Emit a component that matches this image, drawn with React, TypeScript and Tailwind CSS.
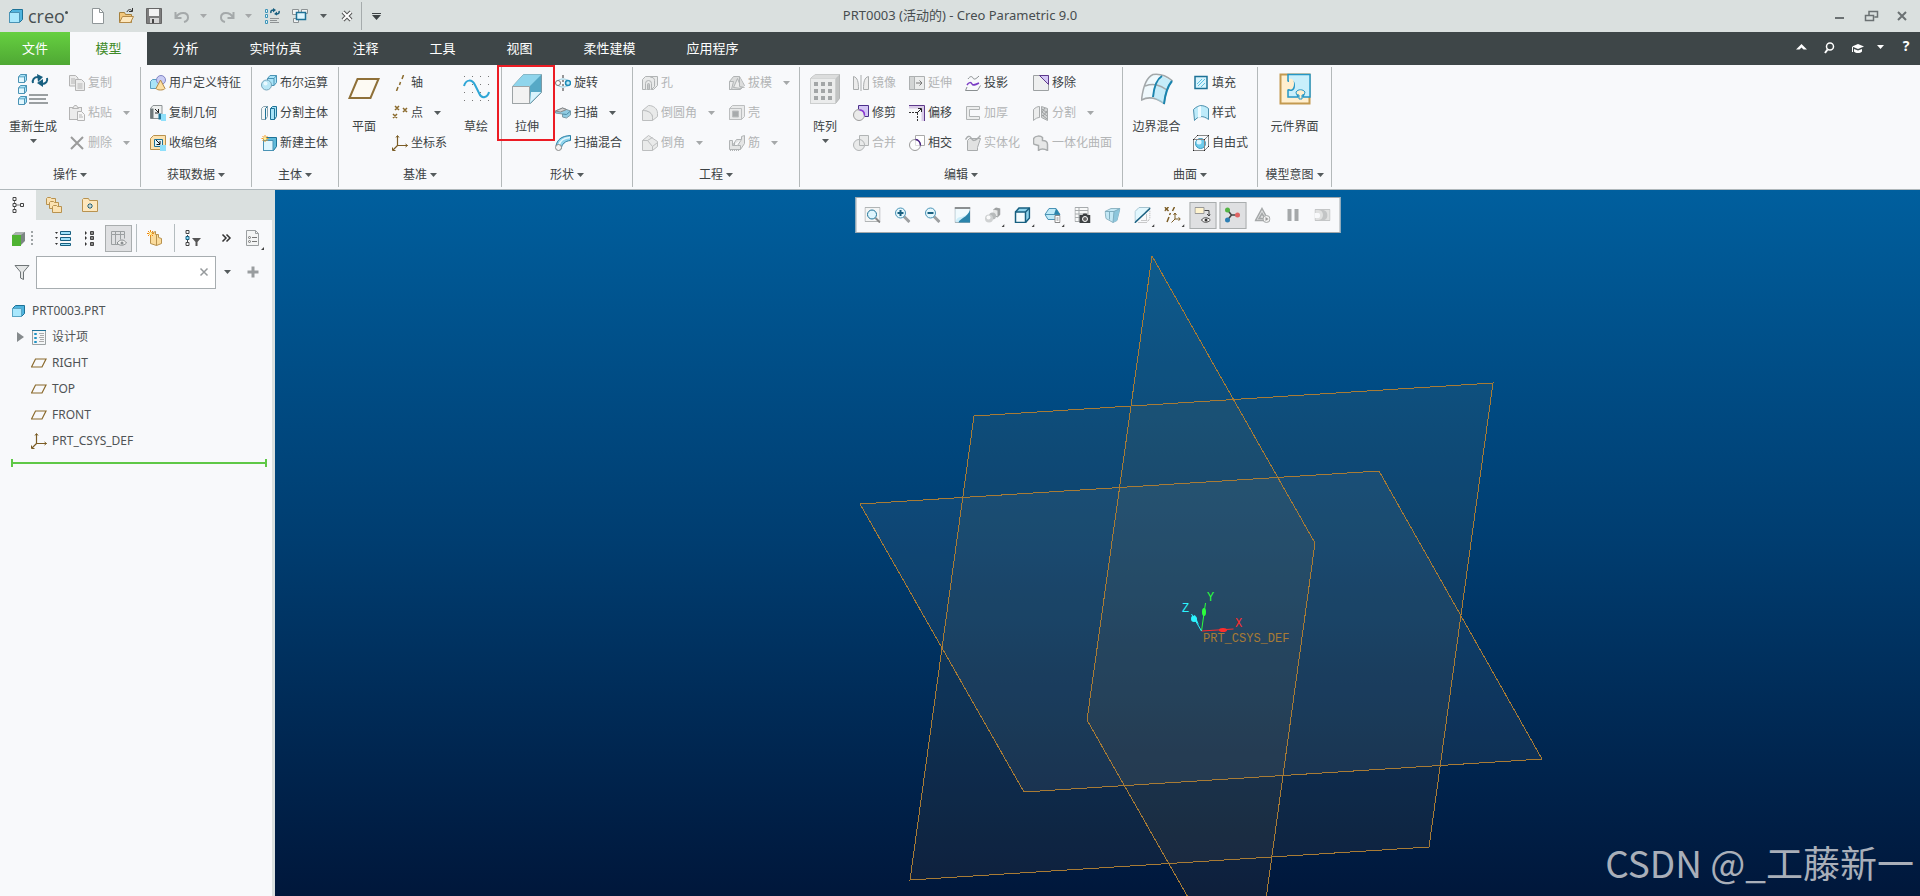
import type { ReactNode } from 'react'
import clsx from 'clsx'

const FONT = 'font-["Noto_Sans","Noto_Sans_CJK_SC",sans-serif]'

interface ArtProps {
  size?: number
  children: ReactNode
}

function Art({ size = 16, children }: ArtProps) {
  return (
    <svg width={size} height={size} viewBox={`0 0 ${size} ${size}`} fill="none" className="block shrink-0" aria-hidden="true">
      {children}
    </svg>
  )
}

function Caret({ className = 'text-[#555b5d]' }: { className?: string }) {
  return (
    <svg width="7" height="4" viewBox="0 0 7 4" className={clsx('shrink-0', className)} aria-hidden="true">
      <path d="M0 0h7L3.5 4z" fill="currentColor" />
    </svg>
  )
}

const Box = ({ x, y }: { x: number; y: number }) => (
  <g transform={`translate(${x} ${y})`}>
    <path d="M.5 3l2-2.500h6v5.500l-2 2.500h-6z" fill="#a9e4f8" stroke="#4a93b5" />
    <path d="M.5 3h6v5.500M6.500 3l2-2.500" stroke="#4a93b5" />
    <rect x="1" y="3.500" width="5" height="4.500" fill="#e2f7fe" />
  </g>
)

// 16px icons of the ribbon rows and the title bar
const icons: Record<string, ReactNode> = {
  copy: (
    <g fill="#ececec" stroke="#b4b4b4">
      <path d="M.5 .5h6l2.500 2.500v8h-8.500z" />
      <path d="M2 4h4M2 6h4M2 8h4" />
      <path d="M6.500 4.500h6l3 3v8h-9z" />
      <path d="M8.500 9h5M8.500 11h5M8.500 13h5" />
    </g>
  ),
  paste: (
    <g fill="#ececec" stroke="#b4b4b4">
      <rect x=".5" y="2.500" width="12" height="12" />
      <path d="M3.500 3.500l2-3h2l2 3z" />
      <path d="M8.500 6.500h4l3 3v6h-7z" fill="#f6f6f6" />
      <path d="M10 10h3M10 12h4" />
    </g>
  ),
  remove: <path d="M2 2l12 12M14 2L2 14" stroke="#9b9b9b" strokeWidth="2" />,
  udf: (
    <>
      <path d="M.5 6.500l2-2h7v7l-2 2h-7z" fill="#a9e4f8" stroke="#5b9dc0" />
      <circle cx="11" cy="5" r="4.500" fill="#c9cdf4" stroke="#8186c4" />
      <path d="M10.500 5l4.500 8.500c-1 2-8 2-9 0z" fill="#fde0a4" stroke="#b48a48" />
    </>
  ),
  copyGeom: (
    <>
      <path d="M.5 3.500l2.500-3h9v9l-2.500 4h-9z" fill="#eef0f0" stroke="#8d9294" />
      <path d="M.5 3.500h3v10h-3z" fill="#6f787b" />
      <path d="M5 4l3 3M8.500 4v4H5" stroke="#222" />
      <path d="M8.500 8.500h3v6h-3z" fill="#1d7297" />
      <path d="M11 9h5v7h-5z" fill="#8fe0fb" />
    </>
  ),
  shrink: (
    <>
      <path d="M.5 3.500l3-3h12v12l-2 2H.5z" fill="#fde3b0" stroke="#b8924f" />
      <path d="M4.500 4.500h8v7h-8z" fill="#dff4fb" stroke="#1d7297" />
      <path d="M6 5l4 4M10 6v3.500H6.500" stroke="#111" />
      <path d="M10 10h6v6h-6z" fill="#8fe0fb" />
    </>
  ),
  boolean: (
    <>
      <path d="M6.500 3.500l2.500-3h6.500v7l-2.500 3h-6.500z" fill="#a9e4f8" stroke="#4a93b5" />
      <path d="M6.500 3.500h6.500v7M13 3.500l2.500-3" stroke="#4a93b5" />
      <circle cx="5.500" cy="10" r="5" fill="#b9e7f6" stroke="#75a5bb" />
      <circle cx="4.500" cy="8.500" r="2" fill="#e9f9ff" />
    </>
  ),
  splitBody: (
    <>
      <path d="M.5 3.500l2-2h4v10l-2 3h-4z" fill="#f3f6f7" stroke="#8aa3ae" />
      <path d="M4.500 3.500v11M4.500 3.500l2-2" stroke="#1d7297" />
      <path d="M9.500 3.500l2-2h4v10l-2 3h-4z" fill="#a9e4f8" stroke="#1d7297" />
      <path d="M9.500 3.500h4v11" stroke="#1d7297" />
    </>
  ),
  newBody: (
    <>
      <path d="M2.500 4.500l2-2h11v9l-3 4h-10z" fill="#5fb9d9" stroke="#1d7297" />
      <path d="M2.500 5.500h9.500v10H2.500z" fill="#dff6fe" stroke="#4a93b5" />
      <path d="M4 0v7M.5 3.500h7M1.500 1l5 5M6.500 1l-5 5" stroke="#f39a1f" />
      <circle cx="4" cy="3.500" r="1.500" fill="#fff3a0" />
    </>
  ),
  axis: <path d="M11.500 0L10 4M8.500 7l-1 3M6 12l-1.500 4" stroke="#8a6a2c" strokeWidth="1.500" />,
  points: <path d="M3 1l4 4M7 1L3 5M11 3l4 4M15 3l-4 4M1 9l4 4M5 9l-4 4" stroke="#8a6a2c" strokeWidth="1.500" />,
  csys: (
    <>
      <path d="M5.500 1v9.500h10M5.500 10.500L1 15" stroke="#7b5c24" strokeWidth="1.200" />
      <path d="M4 2.500L5.500.5 7 2.500M13.500 9l2 1.500-2 1.500M.5 12.500v3h3" stroke="#7b5c24" />
    </>
  ),
  revolve: (
    <>
      <path d="M8 0v3M8 5v2M8 9v2M8 13v3" stroke="#333" />
      <path d="M3 5.500c3-2 7-2 10 0M3 10.500c3 2 7 2 10 0" stroke="#8cc9de" />
      <circle cx="3" cy="8" r="2.500" fill="#fff" stroke="#777" />
      <circle cx="13" cy="8" r="2.500" fill="#bfeaf8" stroke="#1d8bb7" strokeWidth="1.500" />
    </>
  ),
  sweep: (
    <>
      <path d="M.5 6l7-3 8 3v4l-4 3-4-1V9l-7-1z" fill="#8fcbe2" stroke="#7d9aa5" />
      <path d="M.5 6l7-3 4 1.500-6 2.500z" fill="#d2d2d2" stroke="#888" />
      <path d="M7.500 9l4 .5 4-3.500" stroke="#4c8ba5" />
    </>
  ),
  sweepBlend: (
    <>
      <path d="M1 11C2 5 6 1 15.500.5v5C10 6 7 9 6 14z" fill="#8ed3ec" stroke="#2b7fa4" />
      <path d="M4 10C5 6 9 3 15 2.500" stroke="#e6f8fe" strokeWidth="1.500" />
      <circle cx="3.500" cy="12.500" r="3" fill="#f3f3f3" stroke="#888" />
    </>
  ),
  hole: (
    <g fill="#e9eaea" stroke="#b1b4b5">
      <path d="M.5 4.500l3-3h12v9l-4 4h-11z" />
      <path d="M3.500 14.500v-6a3 3 0 0 1 6 0v6M9.500 14.500l3-3v-6a3 3 0 0 0-4-3" />
      <path d="M5.500 14.500v-5a1 1 0 0 1 2 0v5z" fill="#c4c6c7" />
    </g>
  ),
  round: (
    <g fill="#e9eaea" stroke="#bcbebf">
      <path d="M.5 5.500l6-5c5 0 9 3 9 8v3l-5 4v-3c0-4-4-7-10-7z" />
      <path d="M.5 5.500v10h10v-3c0-4-4-7-10-7z" />
    </g>
  ),
  chamfer: (
    <g fill="#e9eaea" stroke="#bcbebf">
      <path d="M.5 5.500l6-5 9 6v5l-5 4z" />
      <path d="M.5 5.500v10h10v-4l-5-6z" />
      <path d="M5.500 5.500l5-3M10.500 11.500l5-4" />
    </g>
  ),
  draft: (
    <g fill="#dcdddd" stroke="#b1b4b5">
      <path d="M.5 6.500l4-5h6l5 9-4 4H.5z" />
      <path d="M.5 14.500v-8h4l-2 8zM4.500 12.500l4-9 4 10z" fill="#ececec" />
      <path d="M10.500 1.500v10l5 1" />
    </g>
  ),
  shell: (
    <g fill="#e9eaea" stroke="#bcbebf">
      <path d="M.5 3.500l3-3h12v11l-3 3H.5z" />
      <path d="M.5 3.500h12v11H.5z" />
      <path d="M3.500 6h6v6h-6z" fill="#a8abac" />
    </g>
  ),
  rib: (
    <g fill="#e4e5e5" stroke="#b1b4b5">
      <path d="M.5 5.500h3v5h5l4-6v-3l3-1v8l-4 6H.5z" />
      <path d="M3.500 10.500l4-6h5M5.500 7.500v3M11.500 14.500v-4h-3" />
      <path d="M1 15.500h10" strokeDasharray="1 1" />
    </g>
  ),
  mirror: (
    <g fill="#ececec" stroke="#a9acad">
      <path d="M.5 14.500V1.500c4 1 5 5 5 13zM15.500 14.500V1.500c-4 1-5 5-5 13z" />
      <path d="M8 0v16" />
    </g>
  ),
  trim: (
    <>
      <path d="M5.500.5h10v11h-4c0-4-2-6-6-6z" fill="#d4c6f5" stroke="#4c2f8c" />
      <circle cx="6" cy="10" r="5.500" fill="#e6e6e6" fillOpacity=".8" stroke="#9b9b9b" />
      <path d="M6.500 5c3 0 5 2 5 5.500" stroke="#8b35d8" strokeWidth="1.500" />
    </>
  ),
  merge: (
    <g fill="#e9eaea" stroke="#b1b4b5">
      <path d="M6.500.5h9v10h-9z" />
      <circle cx="6" cy="10" r="5.500" />
      <path d="M6.500 5v5.500h5" />
    </g>
  ),
  extend: (
    <g stroke="#adb0b1" fill="#eceded">
      <path d="M.5 1.500h5v13h-5zM5.500 1.500h10v13h-10z" />
      <path d="M.5 1.500h5v13h-5z" fill="#d3d5d5" />
      <path d="M7 8h6M10.500 5.500L13 8l-2.500 2.500" stroke="#777" />
    </g>
  ),
  offset: (
    <>
      <path d="M0 2h14v14" stroke="#d9cbe8" strokeWidth="3" />
      <path d="M0 .5h15.500V16" stroke="#5e3a8c" />
      <path d="M0 7.500h8.500V16" stroke="#333" strokeDasharray="2 1" />
      <path d="M8 8l4-4M9 3.500h3.500V7" stroke="#222" />
    </>
  ),
  intersect: (
    <>
      <path d="M6.500.5h9v10h-9z" fill="#fff" stroke="#aaa" />
      <circle cx="6" cy="10" r="5.500" fill="#fff" fillOpacity=".6" stroke="#9b9b9b" />
      <path d="M6.500 4.500c3 0 5 3 5 6" stroke="#4a2485" strokeWidth="1.500" />
    </>
  ),
  project: (
    <>
      <path d="M3 4c2-3 4-3 5-1s3 1 6-2" stroke="#8a8f91" />
      <path d="M2 10c2-3 4-3 5-1s3 1 7-1" stroke="#7a3bc4" strokeWidth="1.500" />
      <path d="M2 12l-1.500 3.500h12l3-5" stroke="#8a8f91" />
    </>
  ),
  thicken: <path d="M1.500 1.500h13v3h-10v7h10v3h-13z" fill="#eceded" stroke="#b1b4b5" />,
  solidify: (
    <g fill="#e1e2e2" stroke="#a9acad">
      <path d="M2.500 5.500l2-2h11l-3 9v3h-10z" />
      <path d="M.5 4.500c3-5 5-3 6-1s3 4 9-3" fill="none" strokeWidth="1.500" />
    </g>
  ),
  removeFace: (
    <>
      <path d="M.5.500h15v15H.5z" fill="#eeefef" stroke="#9da1a2" />
      <path d="M6.500.5h9v9z" fill="#d4c6f5" stroke="#5e3a8c" />
    </>
  ),
  splitFace: (
    <g stroke="#a9acad">
      <path d="M.5 4.500c2-2 4-3 6-3v11c-2 0-4 1-6 3z" fill="#eceded" />
      <path d="M8.500 1.500l6 2v12l-6-3z" fill="#d3d5d6" />
      <path d="M9 4l5 4M9 7l5 4M9 10l5 4M12 3l-3 4M14 6l-4 5" stroke="#9da0a1" />
    </g>
  ),
  unify: <path d="M.5 3.500c2-3 7-3 9-1v3c3 0 5 1 5 4v6c-3-2-7-2-9 0v-5c-3-1-5-1-5-2z" fill="#e6e7e7" stroke="#a9acad" strokeWidth="1.500" />,
  fill: (
    <>
      <path d="M2 1.500h12v12H2z" fill="#d8f4fd" stroke="#1d7297" strokeWidth="1.500" />
      <path d="M4 9l5-5M5 11l7-7M8 12l4-4" stroke="#5fc1e2" />
    </>
  ),
  style: (
    <>
      <path d="M.5 4.500c5-5 10-5 15-1v11c-5-4-10-4-14 1z" fill="#bdebfa" stroke="#4b8fac" />
      <path d="M5 2l3-1v11l-3 1z" fill="#effbff" />
    </>
  ),
  freestyle: (
    <>
      <circle cx="7.500" cy="8.500" r="5" fill="#6dcbec" stroke="#3b9cc0" />
      <circle cx="6" cy="7" r="2.500" fill="#dff6fe" />
      <path d="M.5 4.500l4-4h11v11l-4 4H.5zM.5 4.500h11v11M11.500 4.500l4-4" stroke="#888" />
      <path d="M0 4h1v1H0zM11 4h1v1h-1zM0 15h1v1H0zM11 15h1v1h-1zM15 0h1v1h-1zM4 0h1v1H4zM15 11h1v1h-1z" fill="#222" />
    </>
  ),
  newFile: (
    <>
      <path d="M2.500.5h7l4 4v11h-11z" fill="#fff" stroke="#8f9698" />
      <path d="M9.500.5v4h4" stroke="#8f9698" />
    </>
  ),
  open: (
    <>
      <path d="M1.500 14.500v-10h5l1 2h6v8z" fill="#f2c77d" stroke="#a5803c" />
      <path d="M1.500 14.500l3-6h11l-3 6z" fill="#fde7bd" stroke="#b48a48" />
      <path d="M9 4c1-3 4-3 5-1M14.500 0v3.500H11" stroke="#333" />
    </>
  ),
  save: (
    <>
      <path d="M.5.500h15v15H.5z" fill="#7d7d7d" stroke="#666" />
      <path d="M3 1h10v7H3z" fill="#f2f2f2" />
      <path d="M4 10h9v5H4z" fill="#d5d5d5" />
      <path d="M6 11h2v4H6z" fill="#444" />
    </>
  ),
  undo: <path d="M1.500 4v6h6M2 9.500c3-6 12-6 12 0 0 3-2 4-4 4.500" stroke="#a4a9aa" strokeWidth="2" />,
  redo: <path d="M14.500 4v6h-6M14 9.500c-3-6-12-6-12 0 0 3 2 4 4 4.500" stroke="#a4a9aa" strokeWidth="2" />,
  regen: (
    <>
      <path d="M1.500 1.500h2v3h-2zM1.500 6.500h2v3h-2zM1.500 12.500h2v3h-2z" fill="#dff6fe" stroke="#3f95b8" />
      <path d="M6 10.500h9M6 12.500h7M6 14.500h9" stroke="#8d9294" />
      <path d="M7 5c-.500-2 .500-3 2.500-3M15 3c.500 2-.500 3-2.500 3" stroke="#175f80" strokeWidth="1.500" />
      <path d="M9 0l3 2-3 2.500zM13 3.500v4L10 6z" fill="#175f80" />
    </>
  ),
  windows: (
    <>
      <path d="M.5 1.500h6v5h-6zM9.500 1.500h6v4h-6zM1.500 10.500h5v4h-5z" fill="#f2f4f4" stroke="#8d9294" />
      <path d="M4.500 4.500h9v7h-9z" fill="#dff6fe" stroke="#1d7297" strokeWidth="1.500" />
    </>
  ),
  closeWin: (
    <>
      <path d="M4 4l8 8M12 4l-8 8" stroke="#555" strokeWidth="4" />
      <path d="M4 4l8 8M12 4l-8 8" stroke="#fff" strokeWidth="2" />
    </>
  ),
}

// 32px icons of the tall ribbon buttons
const bigIcons: Record<string, ReactNode> = {
  regen: (
    <>
      <Box x={1} y={1} />
      <Box x={1} y={12} />
      <Box x={1} y={23} />
      <path d="M12 22h19M12 26h17M12 30h19" stroke="#9a9fa1" strokeWidth="2" />
      <path d="M16 10c-1-3 1-6 5-6" stroke="#175f80" strokeWidth="2" />
      <path d="M20 1l6 3-5 5z" fill="#175f80" />
      <path d="M30 5c1 3-1 6-5 6" stroke="#175f80" strokeWidth="2" />
      <path d="M26 6v8l-6-4z" fill="#175f80" />
    </>
  ),
  plane: <path d="M9.500 6h21l-8 19h-21z" fill="#fdfaf3" stroke="#8f7038" strokeWidth="2" />,
  sketch: (
    <>
      <path d="M4 3.500h26M4 11.500h26M4 19.500h26M4 27.500h26" stroke="#777" strokeDasharray="1 7" />
      <path d="M4 13c2-7 8-7 11-1l4 8c3 7 9 4 10-1" stroke="#2fa6d6" strokeWidth="2" />
    </>
  ),
  extrude: (
    <>
      <path d="M1.500 13.500l11-12h18v18l-11 11h-18z" fill="#8ccfe6" stroke="#7b9aa5" />
      <path d="M1.500 13.500h17l12-12h-18z" fill="#8fd5ec" />
      <path d="M19 13L30 2v17l-11 11z" fill="#56a9c6" />
      <path d="M19 30l11-11H20z" fill="#d9f4fc" />
      <path d="M1.500 13.500h17v17h-17z" fill="#f2f2f2" stroke="#9da3a5" />
    </>
  ),
  pattern: (
    <>
      <path d="M1.500 5.500l5-4h24v24l-4 5h-25z" fill="#c2c4c4" stroke="#b5b7b7" />
      <path d="M1.500 5.500h25v25h-25z" fill="#ebecec" stroke="#cdcfcf" />
      <path d="M1.500 5.500l5-4h24l-4 4z" fill="#dcdddd" />
      <path d="M5 9h4v4H5zM12 9h4v4h-4zM19 9h4v4h-4zM5 16h4v4H5zM12 16h4v4h-4zM19 16h4v4h-4zM5 23h4v4H5zM12 23h4v4h-4zM19 23h4v4h-4z" fill="#a3a6a7" />
    </>
  ),
  boundary: (
    <>
      <path d="M.500 27C2 14 6 4 12 1.500c7-1 13 1 19 6-5 6-7 14-8 23-8-6-16-7-22.500-3.500z" fill="#eff9fd" stroke="#a3a8aa" strokeWidth="1.500" />
      <path d="M12 24C13 14 16 6 21 3l10 5c-5 6-7 14-8 23z" fill="#9edff5" fillOpacity=".5" />
      <path d="M4 13c9-3 15-1 22 4" stroke="#a3a8aa" strokeWidth="1.500" />
      <path d="M12 24C13 14 16 6 21 3M23 31c1-9 3-17 8-23" stroke="#1a84ae" strokeWidth="2" />
    </>
  ),
  interface: (
    <>
      <path d="M1.500 1.500h29v29h-29z" fill="#ffefcf" stroke="#c39a50" strokeWidth="2" />
      <path d="M9 1.500h22V24h-7c-1-1 2-2 1-4-2-2-5-2-7 0-1 2 2 3 1 4H9v-7c1-1 2 1 4 0 3-1 3-8 0-9-2-1-3 1-4 0z" fill="#c9effb" stroke="#2497c6" strokeWidth="1.500" />
      <path d="M10 6c2-1 5 0 5 4s-2 7-5 5z" fill="#ffefcf" />
      <path d="M17 19c2-3 7-3 9 0 0 2-2 3-3 3v4h-3v-4c-2 0-3-1-3-3z" fill="#ffefcf" stroke="#2497c6" />
    </>
  ),
}

interface Action {
  icon: string
  label: string
  off?: boolean
  menu?: boolean
}

interface Column {
  width: string
  items: Action[]
}

interface Tall {
  icon: string
  label: string
  width: string
  menu?: boolean
  marked?: boolean
}

interface Group {
  label: string
  width: string
  pad?: string
  parts: (Column | Tall)[]
}

const groups: Group[] = [
  {
    label: '操作',
    width: 'w-[141px]',
    parts: [
      { icon: 'regen', label: '重新生成', width: 'w-[66px]', menu: true },
      {
        width: 'w-[74px]',
        items: [
          { icon: 'copy', label: '复制', off: true },
          { icon: 'paste', label: '粘贴', off: true, menu: true },
          { icon: 'remove', label: '删除', off: true, menu: true },
        ],
      },
    ],
  },
  {
    label: '获取数据',
    width: 'w-[111px]',
    pad: 'pl-1.5',
    parts: [
      {
        width: 'w-[104px]',
        items: [
          { icon: 'udf', label: '用户定义特征' },
          { icon: 'copyGeom', label: '复制几何' },
          { icon: 'shrink', label: '收缩包络' },
        ],
      },
    ],
  },
  {
    label: '主体',
    width: 'w-[87px]',
    pad: 'pl-1.5',
    parts: [
      {
        width: 'w-[80px]',
        items: [
          { icon: 'boolean', label: '布尔运算' },
          { icon: 'splitBody', label: '分割主体' },
          { icon: 'newBody', label: '新建主体' },
        ],
      },
    ],
  },
  {
    label: '基准',
    width: 'w-[163px]',
    parts: [
      { icon: 'plane', label: '平面', width: 'w-[50px]' },
      {
        width: 'w-[62px]',
        items: [
          { icon: 'axis', label: '轴' },
          { icon: 'points', label: '点', menu: true },
          { icon: 'csys', label: '坐标系' },
        ],
      },
      { icon: 'sketch', label: '草绘', width: 'w-[50px]' },
    ],
  },
  {
    label: '形状',
    width: 'w-[131px]',
    parts: [
      { icon: 'extrude', label: '拉伸', width: 'w-[50px]', marked: true },
      {
        width: 'w-[80px]',
        items: [
          { icon: 'revolve', label: '旋转' },
          { icon: 'sweep', label: '扫描', menu: true },
          { icon: 'sweepBlend', label: '扫描混合' },
        ],
      },
    ],
  },
  {
    label: '工程',
    width: 'w-[167px]',
    pad: 'pl-1.5',
    parts: [
      {
        width: 'w-[87px]',
        items: [
          { icon: 'hole', label: '孔', off: true },
          { icon: 'round', label: '倒圆角', off: true, menu: true },
          { icon: 'chamfer', label: '倒角', off: true, menu: true },
        ],
      },
      {
        width: 'w-[72px]',
        items: [
          { icon: 'draft', label: '拔模', off: true, menu: true },
          { icon: 'shell', label: '壳', off: true },
          { icon: 'rib', label: '筋', off: true, menu: true },
        ],
      },
    ],
  },
  {
    label: '编辑',
    width: 'w-[323px]',
    parts: [
      { icon: 'pattern', label: '阵列', width: 'w-[50px]', menu: true },
      {
        width: 'w-[56px]',
        items: [
          { icon: 'mirror', label: '镜像', off: true },
          { icon: 'trim', label: '修剪' },
          { icon: 'merge', label: '合并', off: true },
        ],
      },
      {
        width: 'w-[56px]',
        items: [
          { icon: 'extend', label: '延伸', off: true },
          { icon: 'offset', label: '偏移' },
          { icon: 'intersect', label: '相交' },
        ],
      },
      {
        width: 'w-[68px]',
        items: [
          { icon: 'project', label: '投影' },
          { icon: 'thicken', label: '加厚', off: true },
          { icon: 'solidify', label: '实体化', off: true },
        ],
      },
      {
        width: 'w-[86px]',
        items: [
          { icon: 'removeFace', label: '移除' },
          { icon: 'splitFace', label: '分割', off: true, menu: true },
          { icon: 'unify', label: '一体化曲面', off: true },
        ],
      },
    ],
  },
  {
    label: '曲面',
    width: 'w-[135px]',
    parts: [
      { icon: 'boundary', label: '边界混合', width: 'w-[67px]' },
      {
        width: 'w-[64px]',
        items: [
          { icon: 'fill', label: '填充' },
          { icon: 'style', label: '样式' },
          { icon: 'freestyle', label: '自由式' },
        ],
      },
    ],
  },
  {
    label: '模型意图',
    width: 'w-[74px]',
    parts: [{ icon: 'interface', label: '元件界面', width: 'w-[73px]' }],
  },
]

function SmallButton({ icon, label, off, menu }: Action) {
  return (
    <button
      type="button"
      disabled={off}
      className={clsx('flex h-[30px] items-center gap-[3px] whitespace-nowrap pl-[3px]', off ? 'text-[#b3b5b6]' : 'text-[#3c4244]')}
    >
      <Art>{icons[icon]}</Art>
      <span>{label}</span>
      {menu && (
        <span className="pl-2">
          <Caret className={off ? 'text-[#a5a8a9]' : 'text-[#555b5d]'} />
        </span>
      )}
    </button>
  )
}

function TallButton({ icon, label, width, menu, marked }: Tall) {
  return (
    <button
      type="button"
      className={clsx('relative flex shrink-0 flex-col items-center whitespace-nowrap pt-1.5 text-[#3c4244]', width)}
    >
      <Art size={32}>{bigIcons[icon]}</Art>
      <span className="mt-2.5 leading-6">{label}</span>
      {menu && <Caret />}
      {marked && <span className="absolute -left-[5px] -top-[2px] z-10 h-[76px] w-[58px] border-2 border-[#ec1c24]" />}
    </button>
  )
}

function RibbonGroup({ group }: { group: Group }) {
  return (
    <section className={clsx('flex shrink-0 flex-col border-r border-[#b4b9ba]', group.width)}>
      <div className={clsx('flex h-[91px]', group.pad)}>
        {group.parts.map((part, i) =>
          'items' in part ? (
            <div key={i} className={clsx('flex shrink-0 flex-col items-start pt-px', part.width)}>
              {part.items.map((item) => (
                <SmallButton key={item.label} {...item} />
              ))}
            </div>
          ) : (
            <TallButton key={i} {...part} />
          )
        )}
      </div>
      <button type="button" className="flex h-[29px] items-center justify-center gap-[3px] whitespace-nowrap pt-1 text-[#3c4244]">
        {group.label}
        <Caret />
      </button>
    </section>
  )
}

const tabs = [
  { label: '文件', cls: 'w-[70px] bg-linear-to-b from-[#66d040] to-[#4fa834] text-white' },
  { label: '模型', cls: 'w-[77px] bg-[#f8f9fb] text-[#3f8a28]' },
  { label: '分析', cls: 'w-[77px]' },
  { label: '实时仿真', cls: 'w-[103px]' },
  { label: '注释', cls: 'w-[77px]' },
  { label: '工具', cls: 'w-[77px]' },
  { label: '视图', cls: 'w-[77px]' },
  { label: '柔性建模', cls: 'w-[103px]' },
  { label: '应用程序', cls: 'w-[103px]' },
]

function QuickButton({ icon, label }: { icon: string; label: string }) {
  return (
    <button type="button" aria-label={label}>
      <Art>{icons[icon]}</Art>
    </button>
  )
}

function TitleBar() {
  return (
    <header className="relative flex h-8 shrink-0 items-center bg-[#dae0df]">
      <div className="flex w-[90px] items-center pl-2">
        <Art>
          <path d="M1.500 4.500l3-3h10v10l-3 3h-10z" fill="#4fb4de" stroke="#1d7297" />
          <path d="M1.500 4.500h10v10h-10z" fill="#a9e8fd" stroke="#4a93b5" />
        </Art>
        <span className="ml-1 font-['Open_Sans',sans-serif] text-[18px] leading-6 text-[#474f51]">creo</span>
        <span className="mb-2 size-[3px] rounded-full bg-[#474f51]" />
      </div>
      <div className="flex items-center gap-3">
        <QuickButton icon="newFile" label="新建" />
        <QuickButton icon="open" label="打开" />
        <QuickButton icon="save" label="保存" />
        <span className="flex items-center gap-2.5">
          <QuickButton icon="undo" label="撤销" />
          <Caret className="text-[#a5a8a9]" />
        </span>
        <span className="flex items-center gap-2.5">
          <QuickButton icon="redo" label="重做" />
          <Caret className="text-[#a5a8a9]" />
        </span>
        <QuickButton icon="regen" label="重新生成" />
        <QuickButton icon="windows" label="窗口" />
        <Caret />
        <QuickButton icon="closeWin" label="关闭" />
      </div>
      <span className="ml-1.5 h-7 w-px bg-[#a5abac]" />
      <button type="button" aria-label="自定义" className="ml-2.5">
        <svg width="9" height="7" viewBox="0 0 9 7" aria-hidden="true">
          <path d="M0 0h9v1H0zM0 2h9L4.500 7z" fill="#3c4244" />
        </svg>
      </button>
      <h1 className="pointer-events-none absolute inset-x-0 text-center text-[13px] text-[#474d4f]">
        PRT0003 (活动的) - Creo Parametric 9.0
      </h1>
      <div className="ml-auto flex items-center gap-[15px] pr-2.5 text-[#6b7173]">
        <button type="button" aria-label="最小化">
          <Art>
            <path d="M3 10h9" stroke="currentColor" strokeWidth="2" />
          </Art>
        </button>
        <button type="button" aria-label="还原">
          <Art>
            <path d="M6 7V3.500h8.500V9h-3M2.500 7.500h8v5h-8z" stroke="currentColor" strokeWidth="1.500" />
          </Art>
        </button>
        <button type="button" aria-label="关闭">
          <Art>
            <path d="M4 4l8 8M12 4l-8 8" stroke="currentColor" strokeWidth="2" />
          </Art>
        </button>
      </div>
    </header>
  )
}

function TabBar() {
  return (
    <nav className="flex h-[33px] shrink-0 bg-[#3e4648] text-[13px] text-white">
      {tabs.map((tab) => (
        <button key={tab.label} type="button" className={clsx('shrink-0', tab.cls)}>
          {tab.label}
        </button>
      ))}
      <div className="ml-auto flex items-center gap-3 pb-1 pr-2">
        <button type="button" aria-label="折叠功能区">
          <Art>
            <path d="M3 10.500L8.500 5l5.500 5.500h-3.500l-2-2-2 2z" fill="#fff" />
          </Art>
        </button>
        <button type="button" aria-label="搜索">
          <Art>
            <circle cx="9" cy="7.500" r="3.500" stroke="#fff" strokeWidth="1.500" />
            <path d="M6.500 10.500L4 14" stroke="#fff" strokeWidth="2" />
          </Art>
        </button>
        <button type="button" aria-label="学习">
          <Art>
            <path d="M3 7.500L9 5l6 2.500L9 10z" fill="#fff" />
            <path d="M5 10l4 1.500L13 10v2.500c-2 2-6 2-8 0zM3 8h1v5H3z" fill="#fff" />
          </Art>
        </button>
        <Caret className="text-white" />
        <button type="button" aria-label="帮助" className="w-4 pl-1 text-[14px] font-bold">
          ?
        </button>
      </div>
    </nav>
  )
}

const Plane = () => <path d="M4.500 4h10.500l-4 8H.5z" stroke="#8a6a2c" strokeWidth="1.200" />

const tree: { label: string; icon: ReactNode; indent: string; open?: boolean }[] = [
  {
    label: 'PRT0003.PRT',
    indent: 'pl-[11px]',
    icon: (
      <>
        <path d="M1.500 5.500l3-3h9v8l-3 3h-9z" fill="#4fb4de" stroke="#1d7297" />
        <path d="M1.500 5.500h9v8h-9z" fill="#a9e8fd" stroke="#5aa5c4" />
      </>
    ),
  },
  {
    label: '设计项',
    indent: 'pl-4',
    open: false,
    icon: (
      <>
        <path d="M1.500 1.500h13v14h-13z" fill="#f4f6f7" stroke="#9ba1a3" />
        <path d="M1 1.500h14" stroke="#1d7297" />
        <path d="M3.500 4.500h2v1h-2zM3.500 8.500h2v1h-2zM3.500 12.500h2v1h-2z" stroke="#1e93c5" />
        <path d="M8 4.500h5M9 6.500h4M8 8.500h5M9 10.500h4M8 12.500h5" stroke="#aaa" />
      </>
    ),
  },
  { label: 'RIGHT', indent: 'pl-[31px]', icon: <Plane /> },
  { label: 'TOP', indent: 'pl-[31px]', icon: <Plane /> },
  { label: 'FRONT', indent: 'pl-[31px]', icon: <Plane /> },
  { label: 'PRT_CSYS_DEF', indent: 'pl-[31px]', icon: icons.csys },
]

interface ToolButtonProps {
  label: string
  active?: boolean
  menu?: boolean
  children: ReactNode
}

function ToolButton({ label, active, menu, children }: ToolButtonProps) {
  return (
    <button
      type="button"
      aria-label={label}
      aria-pressed={active}
      className={clsx('relative flex size-[27px] shrink-0 items-center justify-center', active && 'border border-[#a9adae] bg-[#dfe0e2]')}
    >
      <Art>{children}</Art>
      {menu && (
        <svg width="3" height="3" viewBox="0 0 3 3" className="absolute bottom-0.5 right-0.5" aria-hidden="true">
          <path d="M3 0v3H0z" fill="#444" />
        </svg>
      )}
    </button>
  )
}

function Sidebar() {
  return (
    <aside className="flex w-[275px] shrink-0 flex-col border-r-[3px] border-[#dae0df] bg-[#f8f9fb] text-[#4f5355]">
      <div className="flex h-[30px] items-center bg-[#dae0df]">
        <button type="button" aria-label="模型树" className="flex h-full w-9 items-center justify-center bg-[#f8f9fb]">
          <Art>
            <path d="M4.500 1v14M4.500 8h6" stroke="#777" />
            <path d="M3 .5h3v3H3zM3 6.500h3v3H3zM3 12.500h3v3H3zM10.500 6.500h3v3h-3z" fill="#f8f9fb" stroke="#444" />
          </Art>
        </button>
        <button type="button" aria-label="文件夹浏览器" className="flex h-full w-9 items-center justify-center">
          <Art>
            <g fill="#fbe2b2" stroke="#b8924f">
              <path d="M.5 7.500v-6l1-1h3l1 1h4v6z" />
              <path d="M3.500 11.500v-6l1-1h3l1 1h4v6z" />
              <path d="M6.500 15.500v-6l1-1h3l1 1h4v6z" />
            </g>
          </Art>
        </button>
        <button type="button" aria-label="收藏夹" className="flex h-full w-9 items-center justify-center">
          <Art>
            <path d="M.5 14.500v-12l1-1h5l1 2h8v11z" fill="#fde7bd" stroke="#b8924f" />
            <path d="M8 6v6M5 9h6M6 7l4 4M10 7l-4 4" stroke="#175f80" />
            <circle cx="8" cy="9" r="1" fill="#fff" />
          </Art>
        </button>
      </div>

      <div className="flex h-9 items-center pl-2.5">
        <button type="button" aria-label="实体" className="mr-[15px] flex items-center gap-1">
          <Art>
            <path d="M2 6l4-4h9v9l-4 4H2z" fill="#7c8583" />
            <path d="M2 5h9v11H2z" fill="#4fb332" />
            <path d="M2 5l4-3h9l-4 3z" fill="#aab1af" />
          </Art>
          <svg width="4" height="16" viewBox="0 0 4 16" aria-hidden="true">
            <path d="M2 1v15" stroke="#a0a5a6" strokeWidth="2" strokeDasharray="2 2" />
          </svg>
        </button>
        <ToolButton label="全部展开">
          <path d="M0 2h3L1.500 4zM0 7h3L1.500 9zM0 13h3l-1.500 2z" fill="#333" />
          <path d="M5.500 1.500h10v3h-10zM5.500 7.500h10v3h-10zM5.500 13.500h10v2h-10z" fill="#9ee2fa" stroke="#175f80" />
        </ToolButton>
        <ToolButton label="全部折叠">
          <path d="M3 1v4l2-2zM3 6v4l2-2zM3 12v4l2-2z" fill="#333" />
          <path d="M8.500 1.500h3v3h-3zM8.500 6.500h3v3h-3zM8.500 12.500h3v3h-3z" fill="#888" stroke="#444" />
        </ToolButton>
        <span className="w-0.5" />
        <ToolButton label="树列" active>
          <path d="M.5 1.500h13v3H.5zM.5 4.500v10h7M4.500 1.500v13M9.500 1.500v8M13.500 4.500v4" stroke="#9b9fa1" />
          <path d="M6 13c3-4 7-4 9.500 0-3 3-7 3-9.500 0z" fill="#eee" stroke="#8b8f91" />
          <circle cx="11" cy="13" r="1.500" fill="#8b8f91" />
        </ToolButton>
        <span className="ml-1 h-7 w-px bg-[#b4bcbf]" />
        <span className="w-1" />
        <ToolButton label="新建组">
          <path d="M3.500 3.500l5-2v3h3v3l3 1v5l-5 2-6-2z" fill="#fbdc9c" stroke="#b8924f" />
          <path d="M9.500 5v10.500" stroke="#b8924f" />
          <path d="M3.500 0v7M0 3.500h7M1 1l5 5M6 1L1 6" stroke="#f08a10" />
          <circle cx="3.500" cy="3.500" r="1.500" fill="#fff3a0" />
        </ToolButton>
        <span className="ml-1.5 h-7 w-px bg-[#b4bcbf]" />
        <span className="w-1" />
        <ToolButton label="过滤树">
          <path d="M2.500 5v2M2.500 10v2" stroke="#444" />
          <path d="M1 .5h3v3H1zM1 12.500h3v3H1z" stroke="#444" />
          <path d="M1 6.500h3v3H1z" fill="#8fe0fb" stroke="#175f80" />
          <path d="M7 8h9l-3.500 4v4h-2v-4z" fill="#555" />
        </ToolButton>
        <span className="w-1.5" />
        <ToolButton label="更多">
          <path d="M4.500 4.500L8 8l-3.500 3.500M8.500 4.500L12 8l-3.500 3.500" stroke="#333" strokeWidth="1.500" />
        </ToolButton>
        <ToolButton label="设置" menu>
          <path d="M1.500.5h9l3 3v12h-12z" fill="#f4f5f5" stroke="#9b9fa1" />
          <path d="M10.500.5v3h3" stroke="#9b9fa1" />
          <circle cx="4.500" cy="7.500" r="1" stroke="#777" />
          <circle cx="4.500" cy="11.500" r="1" stroke="#777" />
          <path d="M7 7.500h5M7 11.500h5" stroke="#777" />
        </ToolButton>
      </div>

      <div className="flex h-8 items-center">
        <span className="w-9 pl-3.5">
          <Art>
            <path d="M1 1.500h14L9.500 8v7.500L6.500 14V8z" fill="#e4e6e6" stroke="#6f7577" />
          </Art>
        </span>
        <label className="flex h-[33px] w-[180px] items-center border border-[#a7adb0] bg-white">
          <input type="text" aria-label="搜索模型树" className="min-w-0 flex-1 bg-transparent px-2 text-xs outline-none" />
          <button type="button" aria-label="清除" className="mr-[3px]">
            <Art>
              <path d="M4.500 4.500l7 7M11.500 4.500l-7 7" stroke="#969a9c" strokeWidth="1.500" />
            </Art>
          </button>
        </label>
        <button type="button" aria-label="搜索选项" className="ml-2">
          <Caret />
        </button>
        <button type="button" aria-label="添加" className="ml-3.5">
          <Art>
            <path d="M8 2.500v11M2.500 8h11" stroke="#999d9f" strokeWidth="3" />
          </Art>
        </button>
      </div>

      <ul className="mt-2.5">
        {tree.map((node) => (
          <li key={node.label} className={clsx('flex h-[26px] items-center gap-[5px]', node.indent)}>
            {node.open === false && (
              <button type="button" aria-label="展开" className="w-2.5">
                <svg width="8" height="10" viewBox="0 0 8 10" aria-hidden="true">
                  <path d="M1 0l7 5-7 5z" fill="#858a8c" />
                </svg>
              </button>
            )}
            <Art>{node.icon}</Art>
            <span>{node.label}</span>
          </li>
        ))}
      </ul>
      <div className="ml-[11px] mr-[5px] mt-[5px] flex h-2 items-center border-x-2 border-[#5fc846]">
        <div className="h-0.5 w-full bg-[#5fc846]" />
      </div>
    </aside>
  )
}

const Lens = () => (
  <>
    <path d="M9.500 9.500l5.500 5.500" stroke="#9b9fa1" strokeWidth="3" />
    <circle cx="6" cy="6" r="5" fill="#e4f7fd" stroke="#4a93b5" />
  </>
)

const views: { label: string; art: ReactNode; active?: boolean; menu?: boolean }[] = [
  {
    label: '重新调整',
    art: (
      <>
        <path d="M.5.500h15v14H.5z" fill="#f4f5f5" stroke="#b1b5b6" />
        <path d="M11 11l4.500 4.500" stroke="#888" strokeWidth="2" />
        <circle cx="7.500" cy="7.500" r="4.500" fill="#dff5fd" stroke="#1d7297" />
      </>
    ),
  },
  {
    label: '放大',
    art: (
      <>
        <Lens />
        <path d="M6 3v6M3 6h6" stroke="#175f80" strokeWidth="2" />
      </>
    ),
  },
  {
    label: '缩小',
    art: (
      <>
        <Lens />
        <path d="M3 6h6" stroke="#175f80" strokeWidth="2" />
      </>
    ),
  },
  {
    label: '重画',
    art: (
      <>
        <path d="M.5 1.500h15v14H.5z" fill="#cdeefa" stroke="#a7b5bb" />
        <path d="M1 2h14v2c-1 3-5 5-8 6-3 0-5 1-6 5z" fill="#ffffff" fillOpacity=".7" />
        <path d="M15.500 3v12.500H4c1-4 9-5 11.500-12.500z" fill="#2a84ab" />
        <path d="M0 1h16" stroke="#8b8f91" strokeWidth="2" />
      </>
    ),
  },
  {
    label: '渲染选项',
    menu: true,
    art: (
      <>
        <path d="M8.500 2.500l3-2 4.500 1v6l-3 3-4.500-2z" fill="#9ea1a2" />
        <path d="M8.500 2.500l4.500 1v6l-4.500-2z" fill="#e6e7e7" />
        <circle cx="8" cy="9" r="3.500" fill="#b7babb" />
        <circle cx="4.500" cy="11.500" r="4" fill="#cfd1d2" />
        <circle cx="4" cy="10.500" r="2" fill="#fafafa" />
      </>
    ),
  },
  {
    label: '显示样式',
    menu: true,
    art: (
      <>
        <path d="M1 5l3.500-4H15v10l-4 4.500H1z" fill="#8fd3ec" stroke="#175f80" strokeWidth="1.500" />
        <path d="M1 5h10v10.500H1zM11 5l4-4" fill="#f3fbfe" stroke="#175f80" strokeWidth="1.500" />
      </>
    ),
  },
  {
    label: '已保存方向',
    menu: true,
    art: (
      <>
        <path d="M.5 7.500l4-6h7l4 6-3 5h-9z" fill="#bfeaf8" stroke="#4a93b5" />
        <path d="M.5 7.500h15" stroke="#4a93b5" />
        <path d="M11.500 1.500l4 6h-6z" fill="#2a84ab" />
        <path d="M10.500 8.500h5v7h-5z" fill="#fff" stroke="#888" />
        <path d="M12 11h2M12 13h2" stroke="#888" />
      </>
    ),
  },
  {
    label: '视图管理器',
    art: (
      <>
        <path d="M.5.500h13v14H.5zM.5 3.500h13M.5 7h13M.5 10.500h13M4.500.5v14" fill="#f8f9f9" stroke="#a7abad" />
        <path d="M5 8h3l1-1.500h3L13 8h3v8H5z" fill="#3c4042" />
        <circle cx="10.500" cy="12" r="2.500" fill="#666" stroke="#fff" />
      </>
    ),
  },
  {
    label: '透视图',
    art: (
      <>
        <path d="M.5 4.500l6-3h9l-3 12-4 2-7-4z" fill="#c3e8f5" stroke="#8fb5c3" />
        <path d="M9.500 4.500l6-3-3 12-4 2z" fill="#8cc6dc" />
        <path d="M.5 4.500h9l6-3M9.500 4.500l-1 11M5 4.500v8" stroke="#7eaec0" />
      </>
    ),
  },
  {
    label: '截面',
    menu: true,
    art: (
      <>
        <path d="M.5 4.500l4-4h11l-4 4v1l-11 9z" fill="#e2f7fe" stroke="#a5c3cf" />
        <path d="M4 15.500h8l3.500-4v-8M7 13.500h5v-6" stroke="#999" strokeDasharray="1 1" />
        <path d="M0 16L16 1" stroke="#175f80" strokeWidth="1.500" />
      </>
    ),
  },
  {
    label: '基准显示过滤器',
    menu: true,
    art: (
      <>
        <path d="M0 0l4 4M4 0L0 4M10 0L8 4M6 6l-1 2M4.500 10l-2 5" stroke="#7b5c24" strokeWidth="1.500" />
        <path d="M10.500 6v6h5M10.500 12L7 15.500M9 8l1.500-2L12 8M14 10.500l2 1.500-2 1.500" stroke="#7b5c24" />
      </>
    ),
  },
  {
    label: '注释显示',
    active: true,
    art: (
      <>
        <path d="M.5.500h9v6h-9z" fill="#fff4cf" stroke="#999" />
        <path d="M10 3.500h4.500V8M12.500 7l2 2 1.500-2" stroke="#444" />
        <path d="M7 13c2-3 6-3 9 0-3 3-7 3-9 0z" fill="#fff" stroke="#444" />
        <circle cx="11.500" cy="13" r="1.500" fill="#333" />
      </>
    ),
  },
  {
    label: '旋转中心',
    active: true,
    art: (
      <>
        <path d="M3 3l4 5h6M7 8l-4 5" stroke="#444" strokeWidth="1.500" />
        <circle cx="3" cy="3" r="2.500" fill="#54b445" />
        <circle cx="13" cy="8" r="2.500" fill="#e06464" />
        <circle cx="3" cy="13" r="2.500" fill="#2d7fb4" />
      </>
    ),
  },
  {
    label: '仿真',
    art: (
      <>
        <path d="M7.500 1.500l6.500 12H1zM7.500 6.500l3 5h-6z" fill="#e4e5e5" stroke="#a5a8a9" strokeWidth="1.500" />
        <circle cx="12" cy="12" r="3.500" fill="#f1f1f1" stroke="#a5a8a9" />
        <path d="M11 10l3 2-3 2z" fill="#999" />
      </>
    ),
  },
  { label: '暂停', art: <path d="M3 2h4v12H3zM10 2h4v12h-4z" fill="#a5a8aa" /> },
  {
    label: '结果',
    art: (
      <>
        <path d="M.5 2.500h15v11H.5z" fill="#e0e1e1" stroke="#c4c6c7" />
        <path d="M1 3h3c6 0 6 10 0 10h6c4-1 4-9-1-10z" fill="#c3c5c6" />
        <path d="M0 6h4c2 0 2 5 0 5H0z" fill="#f8f9fb" />
      </>
    ),
  },
]

const planes = [
  { points: '1152,256 1315,543 1251,1008 1087,720', fill: '#967c48', opacity: 0.09 },
  { points: '974,416 1493,383 1429,847 910,880', fill: '#967c48', opacity: 0.09 },
  { points: '860,504 1379,471 1542,759 1024,792', fill: '#8c9090', opacity: 0.1 },
]

function Viewport() {
  return (
    <main className="relative min-w-0 flex-1 overflow-hidden bg-linear-to-b from-[#005f9e] via-[#003d70] to-[#00173b]">
      <svg
        viewBox="275 190 1645 706"
        preserveAspectRatio="xMidYMid slice"
        className="absolute inset-0 h-full w-full font-['Liberation_Mono',monospace]"
        aria-label="基准平面"
      >
        {planes.map((p) => (
          <polygon key={p.points} points={p.points} fill={p.fill} fillOpacity={p.opacity} />
        ))}
        {planes.map((p) => (
          <polygon key={p.points} points={p.points} fill="none" stroke="#a87b35" shapeRendering="crispEdges" />
        ))}
        <g strokeWidth="1">
          <path d="M1201.500 631l4-28" stroke="#2cff3c" />
          <ellipse cx="1204" cy="612" rx="2" ry="4" fill="#2cff3c" />
          <path d="M1201.500 631l32-2" stroke="#ff2c2c" />
          <ellipse cx="1223" cy="630" rx="4" ry="2" fill="#ff2c2c" />
          <path d="M1201.500 631l-10-17" stroke="#2cf4ff" />
          <path d="M1191 617l4-2 4 10z" fill="#2cf4ff" />
          <circle cx="1194" cy="619" r="3" fill="#2cf4ff" />
        </g>
        <text x="1207" y="601" fontSize="12" fill="#2cff3c">Y</text>
        <text x="1235" y="627" fontSize="12" fill="#ff2c2c">X</text>
        <text x="1182" y="612" fontSize="12" fill="#2cf4ff">Z</text>
        <text x="1203" y="642" fontSize="12" fill="#a87b35">PRT_CSYS_DEF</text>
      </svg>

      <div className="absolute left-1/2 top-[7px] flex h-9 -translate-x-1/2 items-center gap-[3px] border border-[#a3a9ac] bg-[#f8f9fb] px-[3px]">
        {views.map((view) => (
          <ToolButton key={view.label} label={view.label} active={view.active} menu={view.menu}>
            {view.art}
          </ToolButton>
        ))}
      </div>

      <p className="absolute bottom-3 right-1.5 whitespace-nowrap font-['Noto_Sans_CJK_SC',sans-serif] text-[37px] font-normal leading-[44px] text-[#a9afb9]">
        CSDN @_工藤新一
      </p>
    </main>
  )
}

export default function App() {
  return (
    <div className={clsx('flex h-screen flex-col overflow-hidden bg-[#f8f9fb] text-xs', FONT)}>
      <TitleBar />
      <TabBar />
      <div className="flex h-[125px] shrink-0 border-b border-[#b0b8bb] bg-[#f8f9fb] pb-0.5 pt-0.5">
        {groups.map((group) => (
          <RibbonGroup key={group.label} group={group} />
        ))}
      </div>
      <div className="flex min-h-0 flex-1">
        <Sidebar />
        <Viewport />
      </div>
    </div>
  )
}
